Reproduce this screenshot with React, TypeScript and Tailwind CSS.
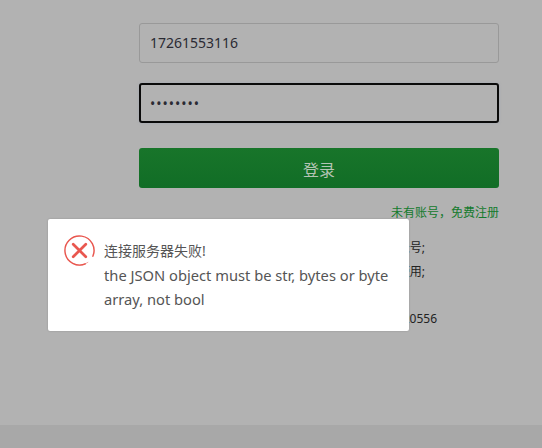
export default function App() {
    return (
        <div className="relative h-[448px] w-[542px] overflow-hidden flex flex-col bg-[#b2b2b2] font-['Noto_Sans','Noto_Sans_CJK_SC',sans-serif] text-[#1c1c1c]">
            <div className="h-[425px] pl-[139px] pt-[23px]">
                <div className="w-[360px]">
                    <input
                        readOnly
                        value="17261553116"
                        className="block h-10 w-full rounded-[3px] border border-[#999999] bg-transparent px-[10px] pb-[2px] text-[14px] text-[#2a2a33] outline-none"
                    />
                    <input
                        readOnly
                        type="password"
                        value="12345678"
                        className="mt-5 block h-10 w-full rounded-[3px] border-2 border-[#0a0a0a] bg-transparent px-[9px] text-[14px] tracking-[1px] text-[#2a2a33] shadow-[0_0_3px_#a3a8b3] outline-none"
                    />
                    <button className="mt-[25px] block h-10 w-full rounded-[3px] bg-gradient-to-b from-[#18752a] to-[#116d26] pt-[4px] text-[16px] text-[#b4c4b4]">
                        登录
                    </button>
                    <div className="mt-[16px] text-right text-[12px] leading-[18px] text-[#137a2c]">
                        {"未有账号\uFF0C免费注册"}
                    </div>
                </div>
                <div className="mt-[14px] w-[286px] text-right text-[12px] text-[#222222]">
                    <div className="h-6 leading-6">请使用已注册的手机号作为登录账号;</div>
                    <div className="h-6 leading-6">密码忘记后请联系管理员重置后使用;</div>
                    <div className="mt-[23px] h-6 w-[298px] leading-6">客服电话:0556-5320556</div>
                </div>
            </div>
            <div className="flex-1 bg-[#a8a8a8]" />
            <div className="absolute left-[48px] top-[219px] flex h-[112px] w-[361px] rounded-[2px] bg-white pl-4 pt-[16px] shadow-[0_0_2px_rgba(0,0,0,0.2)]">
                <svg viewBox="0 0 32 32" className="h-[31px] w-[31px] shrink-0" fill="none" stroke="#e9574f">
                    <path d="M22.5 29.5A15 15 0 1 1 29.5 22.5" strokeWidth="1.5" />
                    <path d="M25 28A15 15 0 0 1 9 29.3" strokeWidth="0.5" />
                    <path d="M9.5 9.5L22.5 22.5M22.5 9.5L9.5 22.5" strokeWidth="2.8" strokeLinecap="round" />
                </svg>
                <div className="ml-[9px] w-[298px] pt-[4px] text-[14.7px] leading-6 text-[#555555]">
                    <div className="text-[14px]">连接服务器失败!</div>
                    <div>the JSON object must be str, bytes or byte array, not bool</div>
                </div>
            </div>
        </div>
    )
}
